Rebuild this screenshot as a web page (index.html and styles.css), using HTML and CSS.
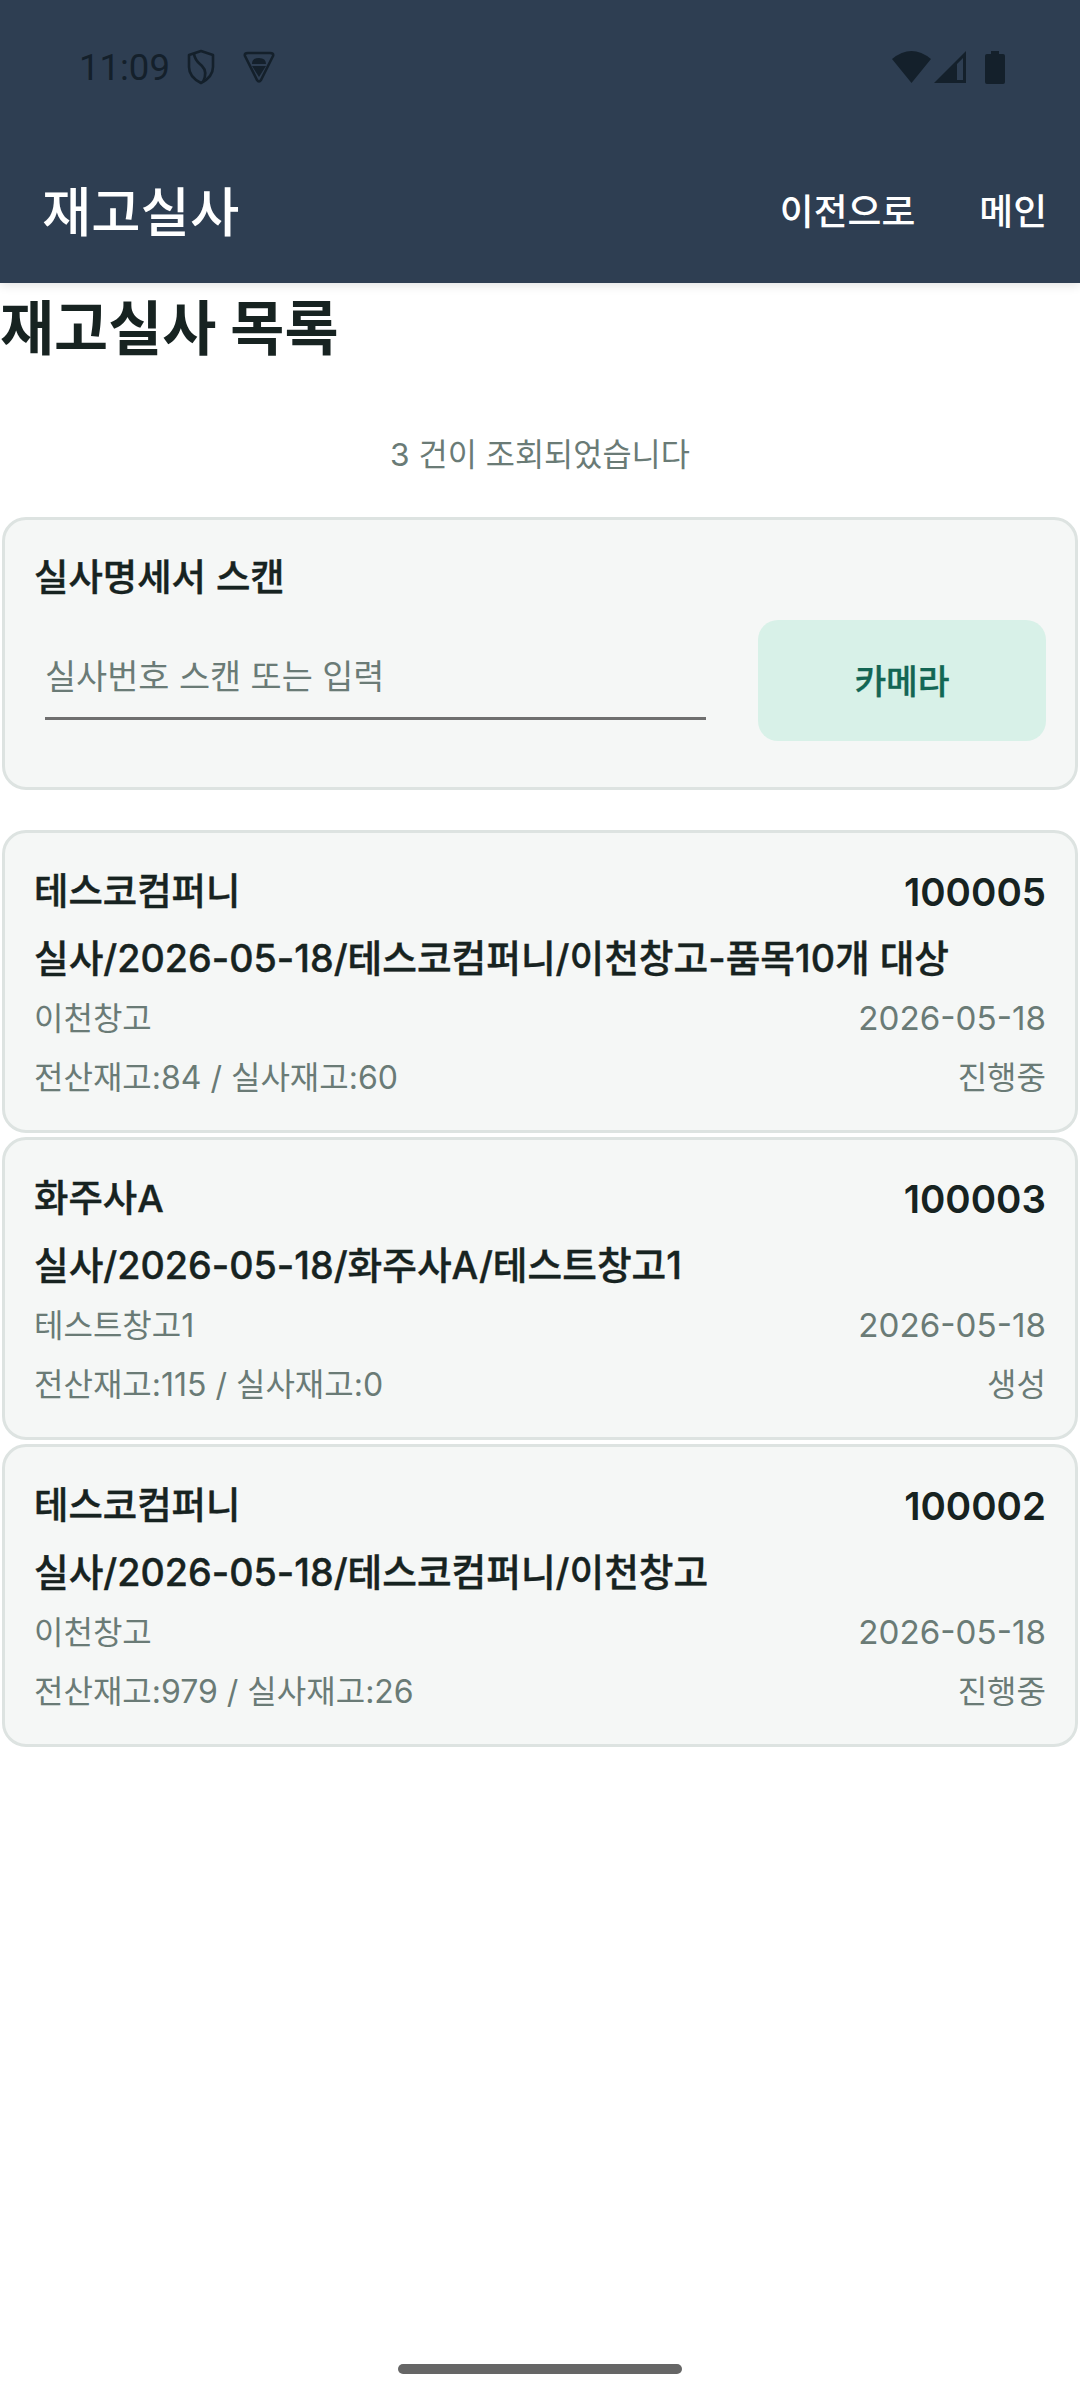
FILE: index.html
```html
<!DOCTYPE html>
<html lang="ko">
<head>
<meta charset="utf-8">
<title>재고실사</title>
<link rel="stylesheet" href="styles.css">
</head>
<body>
<header class="appbar">
  <div class="statusbar">
    <div class="status-left">
      <span class="clock">11:09</span>
      <svg class="ic-shield" viewBox="0 0 28 36" width="28" height="36"><path d="M14 2 L26 6 V18 C26 26 20 31 14 34 C8 31 2 26 2 18 V6 Z" fill="none" stroke="#14202b" stroke-width="2.6" stroke-linejoin="round"/><path d="M7 5 C8 12 12 14 15 17 C19 21 19 27 16 33" fill="none" stroke="#14202b" stroke-width="2.6"/></svg>
      <svg class="ic-bug" viewBox="0 0 34 32" width="34" height="32"><path d="M3 5 Q2 2 6 2 H28 Q32 2 31 5 L19 29 Q17 32 15 29 Z" fill="none" stroke="#14202b" stroke-width="2.6" stroke-linejoin="round"/><path d="M10 13 Q10 7 17 7 Q24 7 24 13 Z M10 15 H24 L17 26 Z" fill="#14202b"/></svg>
    </div>
    <div class="status-right">
      <svg class="ic-wifi" viewBox="0 0 39 32" width="39" height="32"><path d="M0 8 Q19.5 -8 39 8 L19.5 32 Z" fill="#14202b"/></svg>
      <svg class="ic-signal" viewBox="0 0 32 32" width="32" height="32"><path fill-rule="evenodd" d="M32 0 V32 H0 Z M23 13 L29 7 V29 H23 Z" fill="#14202b"/></svg>
      <svg class="ic-batt" viewBox="0 0 20 33" width="20" height="33"><path d="M6 0 H14 V3 H18 Q20 3 20 5 V31 Q20 33 18 33 H2 Q0 33 0 31 V5 Q0 3 2 3 H6 Z" fill="#14202b"/></svg>
    </div>
  </div>
  <div class="toolbar">
    <h1 class="app-title">재고실사</h1>
    <nav class="actions">
      <span class="action">이전으로</span>
      <span class="action">메인</span>
    </nav>
  </div>
</header>
<main class="content">
  <h2 class="page-title">재고실사 목록</h2>
  <p class="count">3 건이 조회되었습니다</p>
  <section class="card scan">
    <div class="scan-title">실사명세서 스캔</div>
    <div class="scan-row">
      <div class="field">실사번호 스캔 또는 입력</div>
      <div class="camera">카메라</div>
    </div>
  </section>
  <div class="list">
    <article class="card item">
      <div class="row head"><span>테스코컴퍼니</span><span class="num">100005</span></div>
      <div class="row name"><span>실사/2026-05-18/테스코컴퍼니/이천창고-품목10개 대상</span></div>
      <div class="row meta"><span>이천창고</span><span class="date">2026-05-18</span></div>
      <div class="row meta"><span>전산재고:84 / 실사재고:60</span><span>진행중</span></div>
    </article>
    <article class="card item">
      <div class="row head"><span>화주사A</span><span class="num">100003</span></div>
      <div class="row name"><span>실사/2026-05-18/화주사A/테스트창고1</span></div>
      <div class="row meta"><span>테스트창고1</span><span class="date">2026-05-18</span></div>
      <div class="row meta"><span>전산재고:115 / 실사재고:0</span><span>생성</span></div>
    </article>
    <article class="card item">
      <div class="row head"><span>테스코컴퍼니</span><span class="num">100002</span></div>
      <div class="row name"><span>실사/2026-05-18/테스코컴퍼니/이천창고</span></div>
      <div class="row meta"><span>이천창고</span><span class="date">2026-05-18</span></div>
      <div class="row meta"><span>전산재고:979 / 실사재고:26</span><span>진행중</span></div>
    </article>
  </div>
</main>
<div class="home-indicator"></div>
</body>
</html>
```

FILE: styles.css
```css
* { box-sizing: border-box; }
html, body { margin: 0; padding: 0; }
body {
  width: 1080px;
  height: 2400px;
  background: #fff;
  font-family: Inter, "Noto Sans CJK KR", sans-serif;
  color: #172321;
  position: relative;
  overflow: hidden;
}
.appbar {
  height: 283px;
  background: #2e3e52;
  box-shadow: 0 2px 10px rgba(0,0,0,.12);
  position: relative;
}
.statusbar {
  height: 136px;
  padding: 49px 75px 0 79px;
  display: flex;
  justify-content: space-between;
  align-items: flex-start;
}
.status-left, .status-right { display: flex; align-items: center; height: 36px; }
.clock { font-family: Roboto, sans-serif; font-size: 36.5px; color: #14202b; width: 108px; }
.ic-bug { margin-left: 27px; }
.status-right { gap: 3px; }
.ic-batt { margin-left: 16px; }
.toolbar {
  height: 145px;
  padding: 0 33px 0 42px;
  display: flex;
  justify-content: space-between;
  align-items: center;
}
.app-title { margin: 0; font-size: 53.6px; font-weight: 500; color: #fff; }
.actions { display: flex; gap: 64px; }
.action { font-size: 36.8px; font-weight: 500; color: #fff; }
.page-title { margin: 0; font-size: 58.8px; line-height: 92px; font-weight: 700; height: 90px; }
.count { margin: 0; text-align: center; font-size: 31.7px; line-height: 40px; color: #6a7b76; padding-top: 62px; height: 144px; }
.card {
  margin: 0 2px;
  background: #f5f7f6;
  border: 3px solid #dde3e1;
  border-radius: 24px;
}
.scan { height: 273px; padding: 35px 29px 0 29px; margin-bottom: 40px; }
.scan-title { font-size: 37.4px; font-weight: 500; line-height: 46px; -webkit-text-stroke: 0.4px currentColor; }
.scan-row { display: flex; justify-content: space-between; margin-top: 19px; align-items: flex-start; }
.field {
  width: 661px; margin-left: 11px; height: 100px; padding-top: 26px; border-bottom: 3px solid #6f6f6f;
  font-size: 33.8px; color: #6a7b76; line-height: 62px;
}
.camera {
  width: 288px; height: 121px; padding-bottom: 4px; background: #d8f1e8; border-radius: 20px;
  color: #136654; font-size: 34.5px; font-weight: 500; -webkit-text-stroke: 0.3px currentColor;
  display: flex; align-items: center; justify-content: center;
}
.list { display: flex; flex-direction: column; gap: 4px; }
.item { height: 303px; padding: 26px 29px 0 29px; }
.row { display: flex; justify-content: space-between; }
.head { font-size: 37.4px; font-weight: 500; line-height: 66px; -webkit-text-stroke: 0.4px currentColor; }
.num { font-size: 38.5px; font-weight: 600; -webkit-text-stroke: 0; }
.name { font-size: 37.7px; font-weight: 500; line-height: 66px; -webkit-text-stroke: 0.4px currentColor; }
.meta { font-size: 32px; color: #6a7b76; line-height: 59px; }
.name + .meta { margin-top: -2px; }
.date { font-size: 33.2px; }
.home-indicator {
  position: absolute; left: 398px; top: 2364px; width: 284px; height: 10px;
  border-radius: 5px; background: #666;
}
```
